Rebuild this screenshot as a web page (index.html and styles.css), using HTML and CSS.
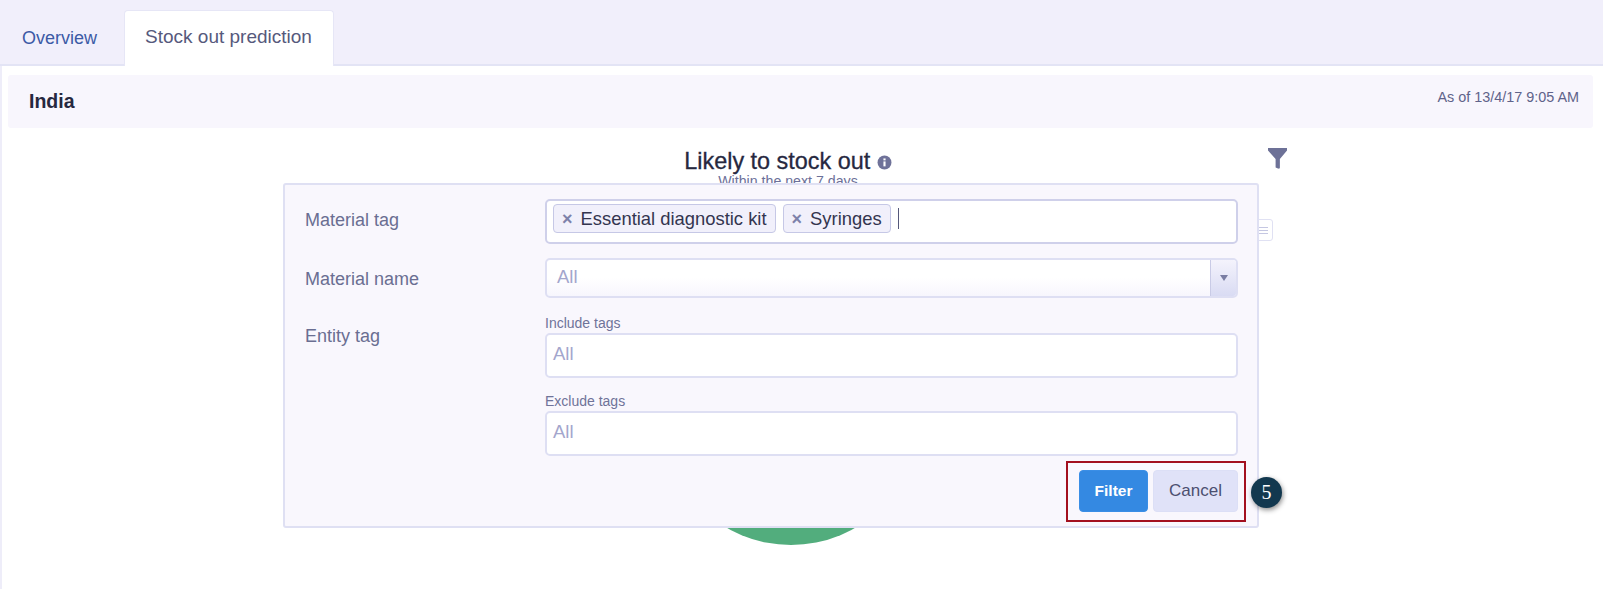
FILE: index.html
```html
<!DOCTYPE html>
<html lang="en">
<head>
  <meta charset="UTF-8" />
  <meta name="viewport" content="width=device-width, initial-scale=1" />
  <title>Stock out prediction</title>
  <link rel="stylesheet" href="styles.css">
</head>
<body>

<div class="tabs">
  <a class="tab">Overview</a>
  <a class="tab active">Stock out prediction</a>
</div>

<div class="content">
  <div class="title-bar">
    <span class="country">India</span>
    <span class="as-of">As of 13/4/17 9:05 AM</span>
  </div>

  <div class="chart-area">
    <div class="chart-head">
      <h2>Likely to stock out
        <svg class="info" viewBox="0 0 14 14" width="15" height="15">
          <circle cx="7" cy="7" r="6.5" fill="#6f7299"/>
          <rect x="6" y="6" width="2" height="4.6" fill="#fff"/>
          <rect x="6" y="3.2" width="2" height="1.8" fill="#fff"/>
        </svg>
      </h2>
      <p>Within the next 7 days</p>
    </div>

    <svg class="funnel" viewBox="0 0 20 22" width="19" height="21">
      <path d="M0 0H20V2.5L12.5 11.5V20.5C12.5 21.6 11.5 22 10.5 21.6L8 20.4V11.5L0 2.5Z" fill="#6d7197"/>
    </svg>

    <div class="donut"></div>

    <div class="menu-btn"><span></span><span></span><span></span></div>

    <!-- Filter panel sits on top of the chart -->
    <div class="filter-panel">
      <div class="row">
        <label>Material tag</label>
        <div class="field tag-input">
          <span class="tag"><i>×</i>Essential diagnostic kit</span>
          <span class="tag"><i>×</i>Syringes</span>
          <span class="caret"></span>
        </div>
      </div>

      <div class="row">
        <label>Material name</label>
        <div class="field select">
          <span class="placeholder">All</span>
          <span class="arrow"></span>
        </div>
      </div>

      <div class="row entity">
        <label>Entity tag</label>
        <div class="tag-groups">
          <div class="group">
            <small>Include tags</small>
            <div class="field plain"><span class="placeholder">All</span></div>
          </div>
          <div class="group">
            <small>Exclude tags</small>
            <div class="field plain"><span class="placeholder">All</span></div>
          </div>
        </div>
      </div>

      <div class="actions">
        <button class="btn btn-primary">Filter</button>
        <button class="btn btn-cancel">Cancel</button>
      </div>
      <div class="highlight"></div>
      <div class="step">5</div>
    </div>
  </div>
</div>

</body>
</html>
```

FILE: styles.css
```css
body {
  margin: 0;
  height: 589px;
  overflow: hidden;
  font-family: "Liberation Sans", Arial, sans-serif;
  background: #fff;
  color: #3f4266;
}
.tabs {
  display: flex;
  align-items: flex-end;
  height: 66px;
  padding-left: 2px;
  box-sizing: border-box;
  background: #f1effb;
  border-bottom: 2px solid #e3e4f5;
}
.tab {
  font-size: 18px;
  color: #3c5aa6;
  padding: 0 20px;
  height: 54px;
  line-height: 57px;
}
.tab.active {
  width: 210px;
  box-sizing: border-box;
  height: 56px;
  margin: 0 0 -2px 7px;
  padding: 0 0 0 20px;
  font-size: 19px;
  line-height: 52px;
  background: #fff;
  color: #56597c;
  border: 1px solid #e6e6f6;
  border-bottom: 0;
  border-radius: 4px 4px 0 0;
}
.content {
  height: 523px;
  padding: 9px 10px 0 8px;
  border-left: 2px solid #eeedf9;
  box-sizing: border-box;
}
.title-bar {
  display: flex;
  justify-content: space-between;
  height: 53px;
  margin-left: -2px;
  padding: 0 14px 0 21px;
  background: #f8f6fd;
  border-radius: 3px;
}
.country {
  font-size: 19.5px;
  font-weight: bold;
  color: #26283f;
  line-height: 53px;
}
.as-of {
  font-size: 14.4px;
  color: #5f638a;
  line-height: 45px;
}
.chart-area {
  position: relative;
  text-align: center;
}
.chart-head {
  width: 1556px;
  padding-top: 21px;
}
.chart-head h2 {
  margin: 0;
  font-size: 23.4px;
  font-weight: normal;
  -webkit-text-stroke: 0.3px #26283f;
  color: #26283f;
  line-height: 24px;
}
.chart-head .info {
  vertical-align: -1px;
}
.chart-head p {
  margin: 0;
  font-size: 14.2px;
  color: #6c7099;
  line-height: 16px;
}
.funnel {
  position: absolute;
  left: 1258px;
  top: 20px;
}
.donut {
  position: absolute;
  left: 652px;
  top: 159px;
  width: 258px;
  height: 258px;
  border-radius: 50%;
  background: #52ad7d;
}
.menu-btn {
  position: absolute;
  left: 1240px;
  top: 91px;
  width: 23px;
  height: 22px;
  box-sizing: border-box;
  border: 1px solid #e0e1f3;
  border-radius: 3px;
  background: #fff;
  display: flex;
  flex-direction: column;
  justify-content: center;
  align-items: flex-end;
  gap: 2px;
  padding-right: 4px;
}
.menu-btn span {
  display: block;
  width: 9px;
  height: 1px;
  background: #c5c7e2;
}
.filter-panel {
  position: absolute;
  left: 273px;
  top: 55px;
  width: 976px;
  height: 345px;
  box-sizing: border-box;
  padding: 14px 19px 0 20px;
  background: #f9f7fd;
  border: 2px solid #dfe0f3;
  border-radius: 3px;
  text-align: left;
}
.row {
  display: flex;
  margin-bottom: 14px;
}
.row label {
  width: 240px;
  height: 44px;
  flex: none;
  font-size: 18px;
  color: #6a6e92;
  line-height: 42px;
}
.row.entity {
  margin-bottom: 0;
}
.row.entity label {
  padding-top: 7px;
  line-height: 26px;
}
.field {
  flex: 1;
  box-sizing: border-box;
  background: #fff;
  border: 2px solid #dedff3;
  border-radius: 5px;
  display: flex;
  align-items: center;
}
.tag-input {
  height: 45px;
  padding: 0 0 6px 6px;
  gap: 7px;
  border-color: #cfd0ea;
}
.tag {
  height: 29px;
  line-height: 27px;
  box-sizing: border-box;
  padding: 0 8px;
  font-size: 18.4px;
  color: #33354f;
  background: #f1f0fb;
  border: 1px solid #c6c8e6;
  border-radius: 4px;
}
.tag i {
  font-style: normal;
  font-weight: bold;
  font-size: 18px;
  color: #7d81aa;
  margin-right: 8px;
}
.caret {
  width: 1px;
  height: 21px;
  background: #55587a;
}
.placeholder {
  font-size: 18.5px;
  color: #a3a6cd;
  padding-bottom: 3px;
}
.select {
  height: 40px;
  padding-left: 10px;
  justify-content: space-between;
  background: linear-gradient(#fff 50%, #f7f6fd);
  overflow: hidden;
}
.arrow {
  width: 26px;
  height: 100%;
  box-sizing: border-box;
  border-left: 1px solid #c9cbe6;
  background: linear-gradient(#f4f3fc, #d9dbf3);
  display: flex;
  align-items: center;
  justify-content: center;
}
.arrow::after {
  content: "";
  border-left: 4px solid transparent;
  border-right: 4px solid transparent;
  border-top: 6px solid #7a7da3;
}
.tag-groups {
  flex: 1;
  margin-top: -1px;
}
.group small {
  display: block;
  font-size: 14px;
  color: #6f7399;
  line-height: 16px;
  margin-bottom: 2px;
}
.group {
  margin-bottom: 15px;
}
.group:last-child {
  margin-bottom: 0;
}
.plain {
  height: 45px;
  padding-left: 6px;
}
.actions {
  position: relative;
  z-index: 1;
  display: flex;
  justify-content: flex-end;
  gap: 5px;
  margin-top: 14px;
}
.btn {
  height: 42px;
  font-family: inherit;
  font-size: 17px;
  border-radius: 4px;
}
.btn-primary {
  width: 69px;
  background: #3489e2;
  border: 1px solid #3a8ee6;
  color: #fff;
  font-size: 15.5px;
  font-weight: bold;
}
.btn-cancel {
  width: 85px;
  background: #e0e2f8;
  border: 1px solid #dcdff6;
  color: #4c4f70;
}
.highlight {
  position: absolute;
  left: 781px;
  top: 276px;
  width: 180px;
  height: 61px;
  box-sizing: border-box;
  border: 2px solid #a3101f;
}
.step {
  position: absolute;
  left: 966px;
  top: 292px;
  width: 31px;
  height: 31px;
  border-radius: 50%;
  background: #12384f;
  color: #fff;
  font-family: "Liberation Serif", serif;
  font-size: 20px;
  line-height: 31px;
  text-align: center;
  box-shadow: 1px 2px 5px rgba(0, 0, 0, 0.45);
}
```
